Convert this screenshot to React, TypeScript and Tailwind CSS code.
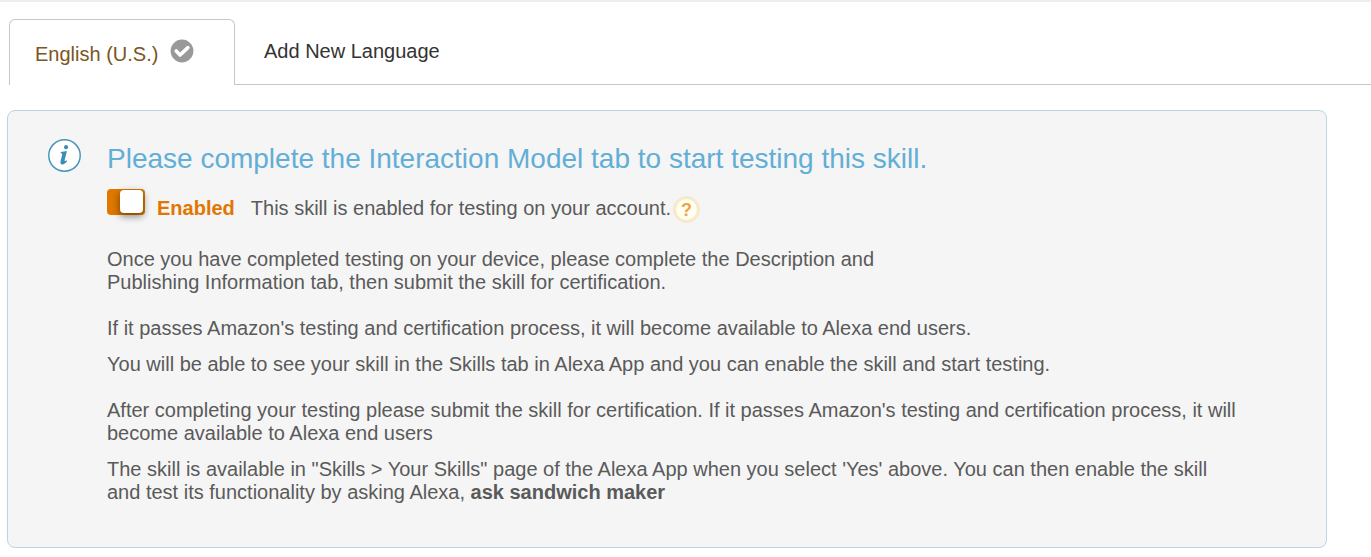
import { useState } from "react";

function CheckBadge() {
  return (
    <svg viewBox="0 0 24 24" className="mb-1 size-6" aria-hidden="true">
      <circle cx="12" cy="12" r="11.4" fill="#999999" />
      <path
        d="M6.2 12l3.9 4 7.8-7.4"
        fill="none"
        stroke="#ffffff"
        strokeWidth="3.6"
        strokeLinecap="round"
        strokeLinejoin="round"
      />
    </svg>
  );
}

function InfoIcon() {
  return (
    <svg viewBox="0 0 34 34" className="size-[33px] shrink-0" aria-hidden="true">
      <circle cx="17" cy="17" r="16.2" fill="#ffffff" stroke="#4796ba" strokeWidth="1.5" />
      <circle cx="18.6" cy="8.4" r="2.1" fill="#3a8db5" />
      <path
        d="M13.2 13.5l6.3-1.1-2.4 9.6c-.2 1 .3 1.1 1.6-.2l1 .8c-1.6 2.4-3.3 3.6-4.8 3.6-2 0-2.4-1.4-1.9-3.5l1.6-6.8c.1-.8-.2-1-1.5-1.1z"
        fill="#3a8db5"
      />
    </svg>
  );
}

export default function App() {
  const [enabled, setEnabled] = useState(true);

  return (
    <div className="border-t-2 border-[#eeeeee] bg-white font-['Liberation_Sans',Arial,sans-serif] text-xl leading-[23px] text-[#5a5a5a]">
      <nav aria-label="Languages" className="flex pt-[17px]">
        <div className="w-[9px] shrink-0" />
        <button
          type="button"
          aria-current="true"
          className="flex h-[66px] w-[226px] shrink-0 items-center gap-3 rounded-t-md border border-b-0 border-[#c8c8c8] pl-[25px] text-[#7b5522]"
        >
          <span className="pt-1">English (U.S.)</span>
          <CheckBadge />
        </button>
        <div className="flex grow border-b border-[#c8c8c8] pl-[29px]">
          <button type="button" className="pb-px text-[#333333]">
            Add New Language
          </button>
        </div>
      </nav>

      <main className="mt-[25px] mr-11 mb-2 ml-[7px] flex gap-[26px] rounded-lg border border-[#bdd3df] bg-[#f5f5f5] pt-7 pr-20 pb-[43px] pl-10">
        <InfoIcon />
        <div className="min-w-0">
          <h1 className="pt-1 text-[28px] leading-8 text-[#62aed6]">
            Please complete the Interaction Model tab to start testing this skill.
          </h1>
          <div className="mt-[14px] flex h-[26px]">
            <input
              id="testing"
              type="checkbox"
              role="switch"
              checked={enabled}
              onChange={(event) => setEnabled(event.target.checked)}
              className="flex h-[26px] w-[38px] appearance-none rounded-sm bg-[#bbbbbb] p-px pr-[2px] before:h-[23px] before:w-[23px] before:rounded-sm before:bg-white before:shadow-[0_3px_7px_1px_rgba(0,0,0,0.4)] checked:justify-end checked:bg-[#e07800]"
            />
            <label htmlFor="testing" className="mt-2 ml-3 font-bold text-[#e07700]">
              {enabled ? "Enabled" : "Disabled"}
            </label>
            <p className="mt-2 ml-4">This skill is enabled for testing on your account.</p>
            <button
              type="button"
              aria-label="Help"
              className="mt-[7px] ml-[2px] flex size-[27px] items-center justify-center rounded-full border-3 border-[#f8e8cc] bg-[#fffff0] text-lg font-bold text-[#f0a24a]"
            >
              ?
            </button>
          </div>
          <p className="mt-[33px] max-w-[800px]">
            Once you have completed testing on your device, please complete the Description and
            Publishing Information tab, then submit the skill for certification.
          </p>
          <p className="mt-[23px]">
            If it passes Amazon's testing and certification process, it will become available to Alexa end users.
          </p>
          <p className="mt-[13px]">
            You will be able to see your skill in the Skills tab in Alexa App and you can enable the skill and start testing.
          </p>
          <p className="mt-[23px]">
            After completing your testing please submit the skill for certification. If it passes Amazon's testing and
            certification process, it will become available to Alexa end users
          </p>
          <p className="mt-[13px]">
            The skill is available in "Skills &gt; Your Skills" page of the Alexa App when you select 'Yes' above. You can
            then enable the skill and test its functionality by asking Alexa, <strong>ask sandwich maker</strong>
          </p>
        </div>
      </main>
    </div>
  );
}
